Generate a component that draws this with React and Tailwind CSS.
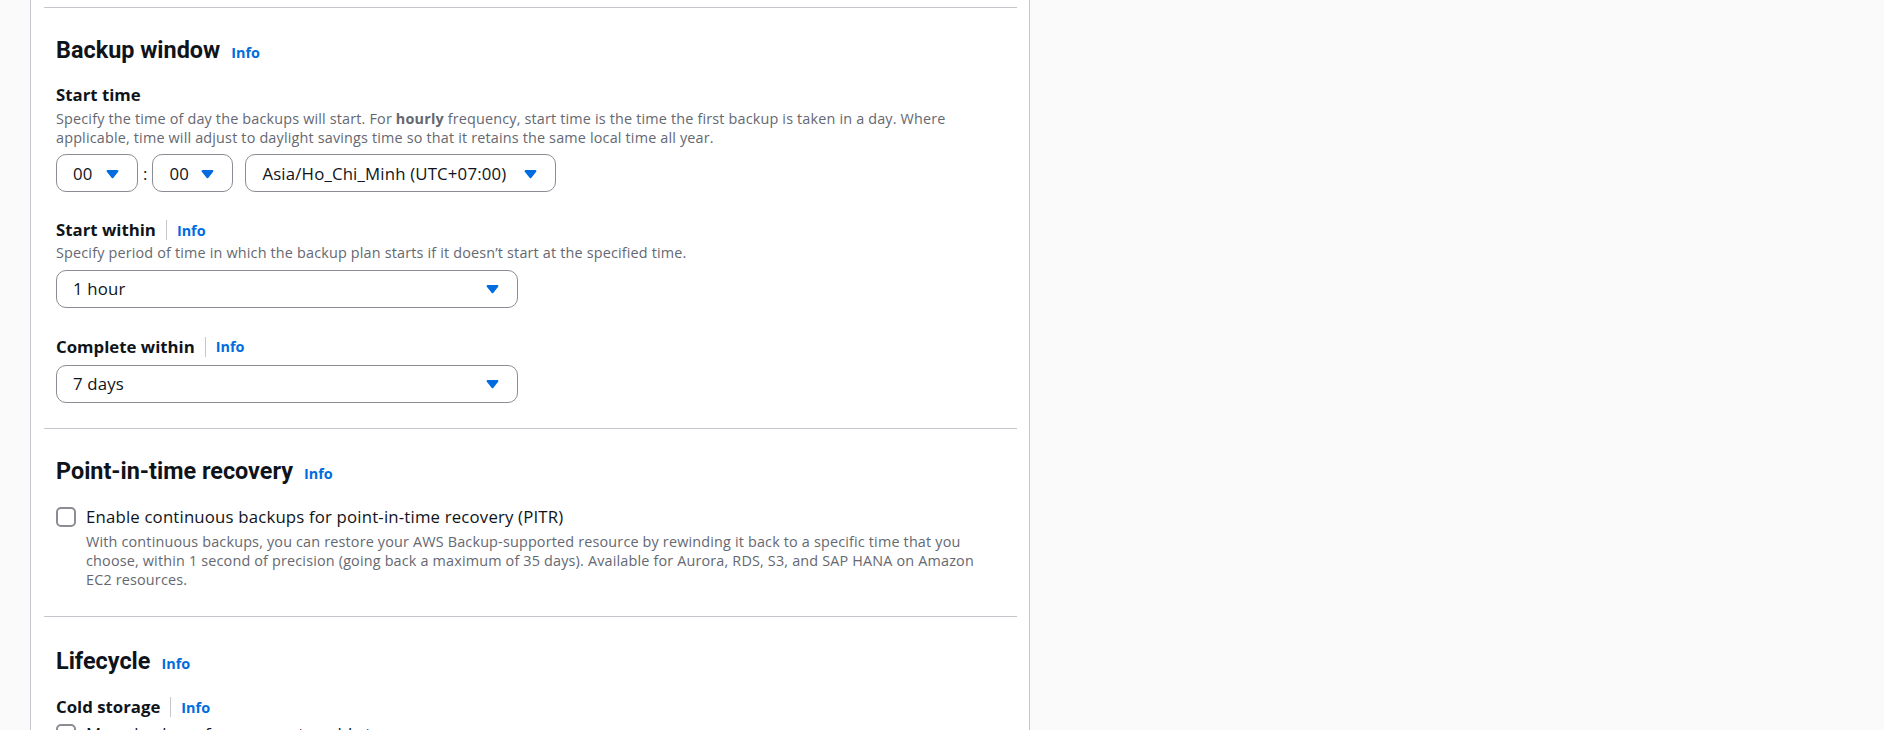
const FONT = "font-['Open_Sans','Liberation_Sans',sans-serif]";
const HEAD_FONT = "font-['Roboto','Liberation_Sans',sans-serif]";

const Caret = () => (
  <svg width="19" height="19" viewBox="0 0 16 16" className="shrink-0">
    <path d="m8 11 4-5H4l4 5Z" fill="#006ce0" stroke="#006ce0" strokeWidth="2" strokeLinejoin="round" />
  </svg>
);

const Info = () => <span className="text-[14.4px] font-bold leading-[19px] text-[#006ce0]">Info</span>;

const Select = ({ value, className = "" }) => (
  <div
    className={`flex h-[38px] items-center justify-between rounded-[10px] border border-[#8c8c94] bg-white pl-[16px] pr-[15px] text-[16.8px] tracking-[0.17px] text-[#0f141a] ${className}`}
  >
    <span>{value}</span>
    <Caret />
  </div>
);

const Heading = ({ children }) => (
  <div className="flex items-baseline gap-[11px]">
    <h2 className={`text-[23.4px] font-bold leading-[29px] text-[#0f141a] ${HEAD_FONT}`}>{children}</h2>
    <Info />
  </div>
);

const Label = ({ children, info = false }) => (
  <div className="flex items-center text-[16.8px] font-bold leading-[22px] text-[#0f141a]">
    <span>{children}</span>
    {info && (
      <>
        <span className="mx-[10px] h-[20px] w-px bg-[#c6c6cd]" />
        <Info />
      </>
    )}
  </div>
);

const Desc = ({ children, className = "" }) => (
  <p className={`text-[14.4px] leading-[19.2px] tracking-[0.17px] text-[#656871] ${className}`}>{children}</p>
);

const Checkbox = () => (
  <span className="mt-[1px] h-[20px] w-[20px] shrink-0 rounded-[5px] border-2 border-[#8c8c94] bg-white" />
);

export default function App() {
  return (
    <div className={`flex h-[730px] w-full overflow-hidden bg-[#fafafa] ${FONT}`}>
      <main className="ml-[30px] w-[1000px] shrink-0 border-x border-[#c6c6cd] bg-white pl-[13px] pr-[12px]">
        <div className="h-[8px] border-b border-[#c6c6cd]" />

        {/* Backup window */}
        <section className="border-b border-[#c6c6cd] px-[12px] pt-[28px] pb-[25px]">
          <Heading>Backup window</Heading>

          <div className="mt-[19px]">
            <Label>Start time</Label>
            <Desc className="mt-[3px] max-w-[920px]">
              Specify the time of day the backups will start. For <span className="font-bold">hourly</span> frequency,
              start time is the time the first backup is taken in a day. Where applicable, time will adjust to daylight
              savings time so that it retains the same local time all year.
            </Desc>
            <div className="mt-[7px] flex items-center">
              <Select value="00" className="w-[82px]" />
              <span className="mx-[5px] text-[16.8px] text-[#0f141a]">:</span>
              <Select value="00" className="w-[81px]" />
              <Select value="Asia/Ho_Chi_Minh (UTC+07:00)" className="ml-[12px] w-[311px]" />
            </div>
          </div>

          <div className="mt-[27px]">
            <Label info>Start within</Label>
            <Desc className="mt-[2px]">
              Specify period of time in which the backup plan starts if it doesn’t start at the specified time.
            </Desc>
            <Select value="1 hour" className="mt-[7px] w-[462px]" />
          </div>

          <div className="mt-[28px]">
            <Label info>Complete within</Label>
            <Select value="7 days" className="mt-[7px] w-[462px]" />
          </div>
        </section>

        {/* Point-in-time recovery */}
        <section className="border-b border-[#c6c6cd] px-[12px] pt-[28px] pb-[27px]">
          <Heading>Point-in-time recovery</Heading>
          <div className="mt-[20px] flex gap-[10px]">
            <Checkbox />
            <div>
              <div className="text-[16.8px] leading-[22px] tracking-[0.17px] text-[#0f141a]">
                Enable continuous backups for point-in-time recovery (PITR)
              </div>
              <Desc className="mt-[4px] max-w-[900px]">
                With continuous backups, you can restore your AWS Backup-supported resource by rewinding it back to a
                specific time that you choose, within 1 second of precision (going back a maximum of 35 days).
                Available for Aurora, RDS, S3, and SAP HANA on Amazon EC2 resources.
              </Desc>
            </div>
          </div>
        </section>

        {/* Lifecycle */}
        <section className="px-[12px] pt-[30px]">
          <Heading>Lifecycle</Heading>
          <div className="mt-[20px]">
            <Label info>Cold storage</Label>
            <div className="mt-[5px] flex gap-[10px]">
              <Checkbox />
              <div className="text-[16.8px] leading-[22px] tracking-[0.17px] text-[#0f141a]">
                Move backups from warm to cold storage
              </div>
            </div>
          </div>
        </section>
      </main>
    </div>
  );
}
